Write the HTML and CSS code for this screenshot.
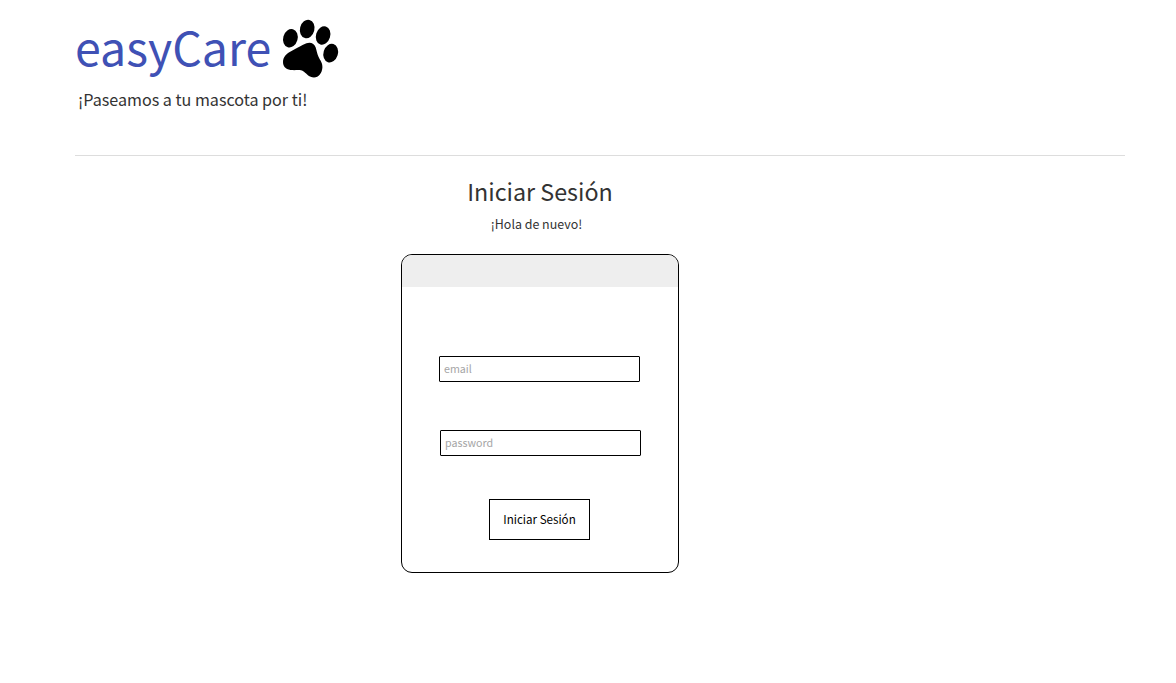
FILE: index.html
```html
<!DOCTYPE html>
<html lang="es">
<head>
<meta charset="utf-8">
<title>easyCare</title>
<link rel="stylesheet" href="styles.css">
</head>
<body>
<header class="header">
  <div class="brand">
    <span class="brand-name">easyCare</span>
    <svg class="paw" viewBox="0 0 76 76" aria-hidden="true">
      <ellipse cx="18.4" cy="28.2" rx="7.2" ry="9.4" transform="rotate(16 18.4 28.2)"/>
      <ellipse cx="35.2" cy="19" rx="7.2" ry="9.4" transform="rotate(14 35.2 19)"/>
      <ellipse cx="51.1" cy="25.5" rx="7.1" ry="9.4" transform="rotate(17 51.1 25.5)"/>
      <ellipse cx="58.7" cy="43.1" rx="7.2" ry="9.5" transform="rotate(17 58.7 43.1)"/>
      <path d="M34.5 33.3C38.6 31.7 42.4 33.6 43.7 37.5C44.8 41 45 43.5 46.6 47C48.2 50.4 50.6 52.6 50.4 57.5C50 63 46.8 67.5 42 67.5C37 67.5 35 64 32 61.8C28.5 59.2 25.5 60.3 20.5 60.1C15 59.9 11 57.5 11 52C11 47 14.5 43.4 19.5 40.9C25 38.2 30 35 34.5 33.3Z"/>
    </svg>
  </div>
  <p class="tagline">¡Paseamos a tu mascota por ti!</p>
</header>
<main class="login">
  <h1 class="title">Iniciar Sesión</h1>
  <p class="greeting">¡Hola de nuevo!</p>
  <form class="card">
    <div class="card-top"></div>
    <input class="field" type="email" placeholder="email">
    <input class="field field-password" type="password" placeholder="password">
    <button class="submit" type="button">Iniciar Sesión</button>
  </form>
</main>
</body>
</html>
```
FILE: styles.css
```css
* { box-sizing: border-box; }
body {
  margin: 0;
  background: #fff;
  color: #333;
  font-family: "Noto Sans CJK SC", "Noto Sans", sans-serif;
}
.header {
  width: 1050px;
  height: 146px;
  margin: 10px 0 0 75px;
  border-bottom: 1px solid #ddd;
}
.brand {
  display: flex;
  height: 76px;
}
.brand-name {
  width: 197px;
  padding-top: 6px;
  color: #3f51b5;
  font-size: 46.5px;
  line-height: 60px;
  white-space: nowrap;
}
.paw {
  width: 76px;
  height: 76px;
  flex: none;
}
.tagline {
  margin: 1px 0 0 3px;
  font-size: 16.12px;
  line-height: 24px;
}
.login {
  width: 278px;
  margin: 0 0 0 401px;
  display: flex;
  flex-direction: column;
  align-items: center;
}
.title {
  margin: 17px 0 0;
  font-size: 23.3px;
  font-weight: 400;
  line-height: 36px;
}
.greeting {
  margin: 5px 7px 0 0;
  font-size: 12.45px;
  line-height: 20px;
}
.card {
  width: 278px;
  height: 319px;
  margin-top: 20px;
  border: 1px solid #000;
  border-radius: 11px;
  overflow: hidden;
}
.card-top {
  height: 32px;
  background: #eee;
}
.field {
  display: block;
  width: 201px;
  height: 26px;
  margin: 69px 0 0 37px;
  padding: 0 4px 2px;
  border: 1px solid #000;
  border-radius: 1px;
  background: #fff;
  font: 10.7px/22px "Noto Sans CJK SC", sans-serif;
}
.field-password { margin: 48px 0 0 38px; }
.field::placeholder { color: #a5a5a5; opacity: 1; }
.submit {
  display: block;
  width: 101px;
  height: 41px;
  margin: 43px 0 0 87px;
  padding: 0;
  border: 1px solid #000;
  background: #fff;
  color: #000;
  font: 11.6px/39px "Noto Sans CJK SC", sans-serif;
}
```
